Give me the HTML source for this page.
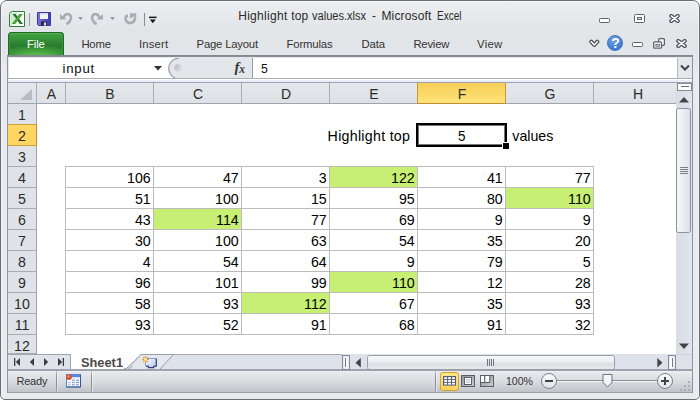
<!DOCTYPE html>
<html><head><meta charset="utf-8"><title>Highlight top values.xlsx - Microsoft Excel</title>
<style>
*{box-sizing:border-box;margin:0;padding:0}
html,body{width:700px;height:400px;overflow:hidden;background:#fff}
body{font-family:"Liberation Sans",sans-serif;color:#222;position:relative}
.abs,#win div,#win span,#win svg{position:absolute}
#win{position:absolute;left:0;top:0;width:700px;height:400px;border:1px solid #6a6f77;border-radius:7px 7px 5px 5px;box-shadow:inset 0 1px 0 #fafbfc,inset 1px 0 0 #f1f3f5,inset -1px 0 0 #f1f3f5;background:linear-gradient(#edeef1 0,#e2e5e8 28px,#e3e6e9 56px,#e9ebef 70px,#e9ebef 100%);overflow:hidden}
.t{white-space:nowrap;line-height:1}
.tab{font-size:12.5px;color:#3a3a3a;top:37px;letter-spacing:-0.1px}
.ch{top:83px;height:21px;padding-left:1px;background:linear-gradient(#e4e7eb,#dde1e6);border-right:1px solid #a9adb3;border-bottom:1px solid #9fa4ab;text-align:center;font-size:14px;line-height:22.300px;color:#2b2b2b}
.rh{left:8px;width:29px;height:21px;background:#dfe3e8;border-right:1px solid #9fa4ab;border-bottom:1px solid #a8acb3;text-align:center;font-size:14.200px;line-height:22.200px;color:#2b2b2b}
.c{height:22px;border:1px solid #bcbcbc;font-size:14.200px;line-height:22.200px;text-align:right;padding-right:2.300px;color:#000}
.g{background:#c6ef73}
</style></head><body>
<div id="win">

<div id="in" style="left:-1px;top:-1px;width:700px;height:400px">
<div class="t" style="left:0;top:0;width:700px;height:30px">
<span class="t" style="left:238.20px;top:10.44px;font-size:12px;letter-spacing:0.301px;color:#2a2a2a">Highlight</span>
<span class="t" style="left:291.20px;top:10.44px;font-size:12px;letter-spacing:0.106px;color:#2a2a2a">top</span>
<span class="t" style="left:312.30px;top:10.44px;font-size:12px;letter-spacing:0.000px;color:#2a2a2a;transform:scaleX(0.9218);transform-origin:0 0">values.xlsx</span>
<span class="t" style="left:372.00px;top:10.44px;font-size:12px;letter-spacing:0.204px;color:#2a2a2a">-</span>
<span class="t" style="left:381.40px;top:10.44px;font-size:12px;letter-spacing:0.170px;color:#2a2a2a">Microsoft</span>
<span class="t" style="left:436.50px;top:10.44px;font-size:12px;letter-spacing:0.000px;color:#2a2a2a;transform:scaleX(0.8349);transform-origin:0 0">Excel</span>
</div>
<div style="left:7px;top:55px;width:686px;height:338px;border:1px solid #8f949c;border-top:none"></div>
<div style="left:7px;top:55px;width:686px;height:3px;background:linear-gradient(#80858d,#8b9098 60%,#b4b8be)"></div>
<div style="left:8px;top:32px;width:56px;height:23px;border-radius:3.500px 3.500px 0 0;border:1px solid #1e6a24;border-bottom:none;box-shadow:inset 0 1px 0 #55ad52,inset 1px 0 0 #3b9440,inset -1px 0 0 #3b9440;background:radial-gradient(ellipse 75% 55% at 50% 108%,#66cb52 0,rgba(80,180,70,.6) 55%,rgba(60,150,60,0) 100%),linear-gradient(#45a244 0,#338c36 35%,#2a7b2d 60%,#2d8230 100%)"></div>
<span class="t" style="left:27.00px;top:39.13px;font-size:11.3px;letter-spacing:-0.102px;color:#fff">File</span>
<span class="t" style="left:81.40px;top:39.13px;font-size:11.3px;letter-spacing:-0.186px;color:#333">Home</span>
<span class="t" style="left:139.10px;top:39.13px;font-size:11.3px;letter-spacing:0.140px;color:#333">Insert</span>
<span class="t" style="left:196.60px;top:39.13px;font-size:11.3px;letter-spacing:-0.196px;color:#333">Page Layout</span>
<span class="t" style="left:286.60px;top:39.13px;font-size:11.3px;letter-spacing:-0.162px;color:#333">Formulas</span>
<span class="t" style="left:361.40px;top:39.13px;font-size:11.3px;letter-spacing:-0.067px;color:#333">Data</span>
<span class="t" style="left:413.40px;top:39.13px;font-size:11.3px;letter-spacing:-0.208px;color:#333">Review</span>
<span class="t" style="left:477.10px;top:39.13px;font-size:11.3px;letter-spacing:0.253px;color:#333">View</span>
<svg style="left:9px;top:11px" width="16" height="16" viewBox="0 0 16 16"><path d="M3.500 .5H15.500V15.500H.5V3.500Q.5 .5 3.500 .5z" fill="#f6fbf4" stroke="#2a8038"/><path d="M1.500 4Q1.500 1.500 4 1.500H8L3 14.500H1.500z" fill="#cfe8cd"/><path d="M3 13L7 7.600 3.600 3H6.600L8.600 5.800 10.700 3H13.500L10 7.700 14 13H10.800L8.500 9.800 6 13z" fill="#1f7232"/><path d="M8.600 5.800L10.700 3H13.500L6 13H3z" fill="#4fa62f"/></svg>
<div style="left:29px;top:13px;width:1px;height:13px;background:#9a9ea5"></div>
<svg style="left:37px;top:12px" width="14" height="14" viewBox="0 0 14 14"><defs><linearGradient id="gV" x1="0" y1="0" x2="1" y2="0"><stop offset="0" stop-color="#7a78de"/><stop offset=".5" stop-color="#5451c6"/><stop offset="1" stop-color="#3f3cad"/></linearGradient></defs><path d="M.5 .5H13.500V13.500H1.500L.5 12.500z" fill="url(#gV)" stroke="#3b389e"/><rect x="3" y="1" width="8" height="6" fill="#f2f4fb"/><rect x="3" y="1" width="8" height="1.500" fill="#d5daf0"/><rect x="4" y="9.500" width="6" height="4" fill="#2a2a4a"/><rect x="7" y="10.500" width="2" height="3" fill="#e8e8f0"/></svg>
<svg style="left:59px;top:12px" width="14" height="13" viewBox="0 0 14 13"><path d="M1 2V7.600H7.300z" fill="#a9acb2"/><path d="M4.600 5.200C6 1.800 9.900 .9 11.400 3.600C12.600 6 11.400 9.400 8.300 11.600" fill="none" stroke="#a9acb2" stroke-width="2.600" stroke-linecap="round"/></svg>
<svg style="left:78px;top:16.500px" width="5" height="4"><path d="M0 0h5l-2.500 3.200z" fill="#9a9da3"/></svg>
<svg style="left:90px;top:12px" width="14" height="13" viewBox="0 0 14 13"><g transform="translate(14,0) scale(-1,1)"><path d="M1 2V7.600H7.300z" fill="#a9acb2"/><path d="M4.600 5.200C6 1.800 9.900 .9 11.400 3.600C12.600 6 11.400 9.400 8.300 11.600" fill="none" stroke="#a9acb2" stroke-width="2.600" stroke-linecap="round"/></g></svg>
<svg style="left:110px;top:16.500px" width="5" height="4"><path d="M0 0h5l-2.500 3.200z" fill="#9a9da3"/></svg>
<svg style="left:123px;top:12px" width="14" height="13" viewBox="0 0 14 13"><path d="M4.800 3.300A4.600 4.100 0 1 0 11.500 5.600" fill="none" stroke="#aaadb3" stroke-width="2.900" stroke-linecap="butt"/><path d="M7 1.200H13.300V5.500L10.500 4.500 7 6.800z" fill="#aaadb3"/></svg>
<div style="left:144px;top:13px;width:1px;height:13px;background:#868a91"></div>
<svg style="left:148.500px;top:16px" width="8" height="8"><rect x="0" y=".6" width="7.600" height="1.500" fill="#1a1a1a"/><path d="M.8 3.600h6L3.800 7.300z" fill="#1a1a1a"/></svg>
<div style="left:599px;top:18px;width:11px;height:5px;border:1.500px solid #5d6168;border-radius:1.500px;background:#fff"></div>
<div style="left:634px;top:14px;width:11px;height:9px;border:1.500px solid #5d6168;border-radius:1.500px;background:#fff"></div>
<div style="left:637px;top:17px;width:5px;height:3px;border:1px solid #5d6168;background:#e8eaed"></div>
<svg style="left:669px;top:14px" width="11" height="9" viewBox="0 0 11 9"><g stroke-linecap="round" fill="none"><path d="M2.200 1.900L8.800 7.100M8.800 1.900L2.200 7.100" stroke="#50545c" stroke-width="3.900"/><path d="M2.200 1.900L8.800 7.100M8.800 1.900L2.200 7.100" stroke="#fff" stroke-width="1.400"/></g></svg>
<svg style="left:588.500px;top:39px" width="11" height="9" viewBox="0 0 11 9"><g fill="none" stroke-linecap="round" stroke-linejoin="round"><path d="M2.300 2.700L5.300 6 8.300 2.700" stroke="#484c54" stroke-width="4"/><path d="M2.300 2.700L5.300 6 8.300 2.700" stroke="#fff" stroke-width="1.600"/></g></svg>
<div style="left:607px;top:35px;width:16px;height:16px;border-radius:8px;border:1px solid #4173bd;background:radial-gradient(circle at 42% 28%,#76a6ea 0,#4a85d8 50%,#3b71c6 100%)"></div>
<span class="t" style="left:611.200px;top:35.700px;font-size:14px;font-weight:bold;color:#fff">?</span>
<div style="left:632px;top:42px;width:11px;height:5px;border:1.500px solid #5d6168;border-radius:1.500px;background:#fff"></div>
<svg style="left:653px;top:38px" width="12" height="11" viewBox="0 0 12 11"><rect x="5.700" y=".7" width="5.700" height="6.600" rx="1" fill="#fff" stroke="#5d6168" stroke-width="1.300"/><rect x=".7" y="3.900" width="7.800" height="6.300" rx="1" fill="#fff" stroke="#5d6168" stroke-width="1.300"/><rect x="2.900" y="6.300" width="3.400" height="1.900" fill="#e4e6ea" stroke="#5d6168" stroke-width=".9"/></svg>
<svg style="left:676px;top:38.500px" width="11" height="9" viewBox="0 0 11 9"><g stroke-linecap="round" fill="none"><path d="M2.200 1.900L8.800 7.100M8.800 1.900L2.200 7.100" stroke="#50545c" stroke-width="3.900"/><path d="M2.200 1.900L8.800 7.100M8.800 1.900L2.200 7.100" stroke="#fff" stroke-width="1.400"/></g></svg>
<div style="left:8px;top:57px;width:684px;height:22px;background:#e3e6ea"></div>
<div style="left:9px;top:58px;width:175px;height:20px;background:#fff"></div>
<span class="t" style="left:62.60px;top:61.73px;font-size:13.2px;letter-spacing:0.755px;color:#111">input</span>
<svg style="left:154px;top:66px" width="9" height="5"><path d="M0 0h8l-4 4.5z" fill="#333"/></svg>
<svg style="left:168px;top:57.500px" width="85" height="21" viewBox="0 0 85 21"><path d="M11 0H85V21H11A10.500 10.500 0 0 1 11 0z" fill="#e3e6ea"/><path d="M11 .2A10.300 10.300 0 0 0 11 20.800" fill="none" stroke="#9b9fa6" stroke-width="1.100"/></svg>
<div style="left:173.500px;top:63.500px;width:8.500px;height:8.500px;border-radius:5px;background:radial-gradient(circle at 30% 30%,#bcbfc5,#dfe1e4 80%)"></div>
<span class="t" style="left:234.500px;top:60.300px;font-size:15px;font-family:'Liberation Serif',serif;font-style:italic;font-weight:bold;color:#383838">f<span style="position:relative;font-size:11.500px;margin-left:-.2px;top:1.200px">x</span></span>
<div style="left:252px;top:58px;width:425px;height:20px;background:#fff;border-left:1px solid #979ba3"></div>
<span class="t" style="left:260.60px;top:62.09px;font-size:13.6px;letter-spacing:0.000px;color:#111;transform:scaleX(0.8990);transform-origin:0 0">5</span>
<div style="left:677px;top:58px;width:15px;height:20px;background:#e4e7eb;border-left:1px solid #b5b9bf"></div>
<svg style="left:680px;top:64px" width="10" height="8"><path d="M1 1.5l4 4 4-4" fill="none" stroke="#444" stroke-width="2"/></svg>
<div style="left:8px;top:78px;width:684px;height:5px;background:#fff;border-top:1px solid #a9adb4;border-bottom:1px solid #9fa4ab"></div>
<div style="left:8px;top:80px;width:684px;height:2px;background:linear-gradient(#f1f3fc,#e3e7f6)"></div>
<div style="left:8px;top:83px;width:669px;height:271px;background:#fff"></div>
<div class="ch" style="left:8px;width:29px;top:83px"></div>
<svg style="left:20px;top:89px" width="13" height="12"><path d="M12 0v11H0z" fill="#b9bcc1"/></svg>
<div class="ch" style="left:37px;width:29px;top:83px">A</div>
<div class="ch" style="left:66px;width:88px;top:83px">B</div>
<div class="ch" style="left:154px;width:88px;top:83px">C</div>
<div class="ch" style="left:242px;width:88px;top:83px">D</div>
<div class="ch" style="left:330px;width:88px;top:83px">E</div>
<div class="ch" style="left:417px;width:89px;top:83px;background:linear-gradient(#f8cd57,#fbd968 50%,#fee37b);border-left:1px solid #c99a3c;border-right-color:#c99a3c;border-bottom-color:#c28c32;color:#2f352f">F</div>
<div class="ch" style="left:506px;width:88px;top:83px">G</div>
<div class="ch" style="left:594px;width:88px;top:83px">H</div>
<div class="rh" style="top:104px;height:21px">1</div>
<div class="rh" style="top:124px;height:22px;line-height:22.200px;background:#ffd661;border-top:1px solid #d3a13c;border-bottom-color:#d3a13c;border-right-color:#c28c32">2</div>
<div class="rh" style="top:146px;height:21px">3</div>
<div class="rh" style="top:167px;height:21px">4</div>
<div class="rh" style="top:188px;height:21px">5</div>
<div class="rh" style="top:209px;height:21px">6</div>
<div class="rh" style="top:230px;height:21px">7</div>
<div class="rh" style="top:251px;height:21px">8</div>
<div class="rh" style="top:272px;height:21px">9</div>
<div class="rh" style="top:293px;height:21px">10</div>
<div class="rh" style="top:314px;height:21px">11</div>
<div class="rh" style="top:335px;height:19px">12</div>
<div class="c" style="left:65px;top:166px;width:89px">106</div>
<div class="c" style="left:153px;top:166px;width:89px">47</div>
<div class="c" style="left:241px;top:166px;width:89px">3</div>
<div class="c g" style="left:329px;top:166px;width:89px">122</div>
<div class="c" style="left:417px;top:166px;width:89px">41</div>
<div class="c" style="left:505px;top:166px;width:89px">77</div>
<div class="c" style="left:65px;top:187px;width:89px">51</div>
<div class="c" style="left:153px;top:187px;width:89px">100</div>
<div class="c" style="left:241px;top:187px;width:89px">15</div>
<div class="c" style="left:329px;top:187px;width:89px">95</div>
<div class="c" style="left:417px;top:187px;width:89px">80</div>
<div class="c g" style="left:505px;top:187px;width:89px">110</div>
<div class="c" style="left:65px;top:208px;width:89px">43</div>
<div class="c g" style="left:153px;top:208px;width:89px">114</div>
<div class="c" style="left:241px;top:208px;width:89px">77</div>
<div class="c" style="left:329px;top:208px;width:89px">69</div>
<div class="c" style="left:417px;top:208px;width:89px">9</div>
<div class="c" style="left:505px;top:208px;width:89px">9</div>
<div class="c" style="left:65px;top:229px;width:89px">30</div>
<div class="c" style="left:153px;top:229px;width:89px">100</div>
<div class="c" style="left:241px;top:229px;width:89px">63</div>
<div class="c" style="left:329px;top:229px;width:89px">54</div>
<div class="c" style="left:417px;top:229px;width:89px">35</div>
<div class="c" style="left:505px;top:229px;width:89px">20</div>
<div class="c" style="left:65px;top:250px;width:89px">4</div>
<div class="c" style="left:153px;top:250px;width:89px">54</div>
<div class="c" style="left:241px;top:250px;width:89px">64</div>
<div class="c" style="left:329px;top:250px;width:89px">9</div>
<div class="c" style="left:417px;top:250px;width:89px">79</div>
<div class="c" style="left:505px;top:250px;width:89px">5</div>
<div class="c" style="left:65px;top:271px;width:89px">96</div>
<div class="c" style="left:153px;top:271px;width:89px">101</div>
<div class="c" style="left:241px;top:271px;width:89px">99</div>
<div class="c g" style="left:329px;top:271px;width:89px">110</div>
<div class="c" style="left:417px;top:271px;width:89px">12</div>
<div class="c" style="left:505px;top:271px;width:89px">28</div>
<div class="c" style="left:65px;top:292px;width:89px">58</div>
<div class="c" style="left:153px;top:292px;width:89px">93</div>
<div class="c g" style="left:241px;top:292px;width:89px">112</div>
<div class="c" style="left:329px;top:292px;width:89px">67</div>
<div class="c" style="left:417px;top:292px;width:89px">35</div>
<div class="c" style="left:505px;top:292px;width:89px">93</div>
<div class="c" style="left:65px;top:313px;width:89px">93</div>
<div class="c" style="left:153px;top:313px;width:89px">52</div>
<div class="c" style="left:241px;top:313px;width:89px">91</div>
<div class="c" style="left:329px;top:313px;width:89px">68</div>
<div class="c" style="left:417px;top:313px;width:89px">91</div>
<div class="c" style="left:505px;top:313px;width:89px">32</div>
<span class="t" style="left:327.60px;top:128.98px;font-size:14.2px;letter-spacing:0.289px;color:#000">Highlight top</span>
<span class="t" style="left:512.30px;top:128.98px;font-size:14.2px;letter-spacing:-0.008px;color:#000">values</span>
<div style="left:416px;top:123px;width:91px;height:24px;border:2px solid #000;box-shadow:inset 0 0 0 1px #777;background:#fff"></div>
<span class="t" style="left:458.00px;top:128.98px;font-size:14.2px;letter-spacing:0.000px;color:#000;transform:scaleX(0.9497);transform-origin:0 0">5</span>
<div style="left:502px;top:142px;width:7px;height:7px;background:#000;border:1px solid #fff;border-right:none;border-bottom:none"></div>
<div style="left:676px;top:83px;width:16px;height:271px;background:linear-gradient(90deg,#d8dce4,#e1e5ec)"></div>
<div style="left:677px;top:83px;width:15px;height:8px;background:#fbfbff;border:1px solid #868a92"></div>
<div style="left:681px;top:86px;width:8px;height:1px;background:#6a6e76"></div>
<svg style="left:679px;top:96px" width="11" height="7"><path d="M0 6.5h10L5 1z" fill="#444"/></svg>
<div style="left:676px;top:108px;width:15px;height:125px;border:1px solid #8d9199;border-radius:2.500px;background:linear-gradient(90deg,#f5f6f9,#eceef2 45%,#dde0e6)"></div>
<div style="left:680px;top:167px;width:8px;height:1px;background:#7a7e86"></div>
<div style="left:680px;top:169px;width:8px;height:1px;background:#7a7e86"></div>
<div style="left:680px;top:171px;width:8px;height:1px;background:#7a7e86"></div>
<div style="left:680px;top:173px;width:8px;height:1px;background:#7a7e86"></div>
<svg style="left:679px;top:343px" width="11" height="7"><path d="M0 .5h10L5 6z" fill="#444"/></svg>
<div style="left:8px;top:354px;width:684px;height:16px;background:#dde1ea"></div>
<div style="left:141px;top:354px;width:201px;height:1px;background:#a5a9b0"></div>
<div style="left:8px;top:369px;width:684px;height:2px;background:linear-gradient(#aeb2ba 0,#959aa2 50%,#9da1a9 75%,#d8dbe0 100%)"></div>
<div style="left:8px;top:354px;width:63px;height:15px;background:#dfe3ea;border-top:1px solid #a0a4ab;border-right:1px solid #a0a4ab"></div>
<svg style="left:13px;top:357.500px" width="56" height="9"><g fill="#3c3c3c"><rect x="1" y="0" width="1.300" height="8"/><path d="M7 0v8L2.800 4z"/><path d="M21 0v8l-4.200-4z"/><path d="M31 0v8l4.200-4z"/><path d="M45 0v8l4.200-4z"/><rect x="49.700" y="0" width="1.300" height="8"/></g></svg>
<svg style="left:70px;top:354px" width="74" height="16"><path d="M1 0V15H53Q56.500 14.500 58.500 12L71 0z" fill="#fff"/><path d="M53.500 15.300Q57 15 58.800 12.500L71 .5" fill="none" stroke="#8e939b" stroke-width="1"/></svg>
<span class="t" style="left:80.60px;top:355.57px;font-size:13.5px;letter-spacing:0.000px;color:#4a4a4a;font-weight:bold;transform:scaleX(0.9487);transform-origin:0 0">Sheet1</span>
<svg style="left:126px;top:354px" width="50" height="16"><path d="M15.500 .5H47.500L34 15H2Q5 14.500 6.500 12z" fill="#e4e7eb"/><path d="M15 .5H47.500L34 15" fill="none" stroke="#9a9fa7" stroke-width="1"/><path d="M2.500 14.500Q5 14 6.500 12" fill="none" stroke="#9a9fa7" stroke-width="1"/></svg>
<svg style="left:141.500px;top:355.800px" width="17" height="14" viewBox="0 0 17 14"><defs><linearGradient id="gS" x1="0" y1="0" x2="1" y2="1"><stop offset="0" stop-color="#fbfcff"/><stop offset="1" stop-color="#b9c8e6"/></linearGradient></defs><path d="M3.500 2.500H14V10H11.500V11.300H6.500V10H3.500z" fill="url(#gS)" stroke="#7f9bd0" stroke-width="1"/><path d="M4 10.300H6.300V11.600H11.800V10.300H14.400V2.500" fill="none" stroke="#2e4474" stroke-width="1.100"/><g stroke="#e8951c" stroke-width="1.100"><path d="M3.500 .2v6.600M.2 3.500h6.600M1.200 1.200l4.600 4.600M5.800 1.200L1.200 5.800"/></g><circle cx="3.500" cy="3.500" r="1.400" fill="#fff6c8"/></svg>
<div style="left:342px;top:355px;width:335px;height:14px;background:#dde1ea"></div>
<div style="left:342px;top:355px;width:8px;height:15px;background:#fbfbff;border:1px solid #868a92;box-shadow:inset 0 0 0 1px #e8eaf6"></div>
<div style="left:345px;top:358px;width:1px;height:9px;background:#777"></div>
<svg style="left:354.500px;top:358px" width="7" height="10"><path d="M5.800 0v9.500L.5 4.700z" fill="#444"/></svg>
<div style="left:367px;top:354.500px;width:248px;height:15px;border:1px solid #9a9fa7;border-radius:2.500px;background:linear-gradient(#f6f7f9,#eceef1 45%,#dcdfe4 55%,#e4e7eb)"></div>
<div style="left:487px;top:359px;width:1px;height:7px;background:#6f747c"></div>
<div style="left:489px;top:359px;width:1px;height:7px;background:#6f747c"></div>
<div style="left:491px;top:359px;width:1px;height:7px;background:#6f747c"></div>
<div style="left:493px;top:359px;width:1px;height:7px;background:#6f747c"></div>
<svg style="left:657px;top:358px" width="7" height="10"><path d="M.3 0v9.500L5.500 4.700z" fill="#444"/></svg>
<div style="left:668px;top:355px;width:8px;height:15px;background:#fbfbff;border:1px solid #868a92;box-shadow:inset 0 0 0 1px #e8eaf6"></div>
<div style="left:671.500px;top:358px;width:1px;height:9px;background:#777"></div>
<div style="left:677px;top:354px;width:15px;height:15px;background:#dde1ea;border-top:1px solid #cfd3d9"></div>
<div style="left:8px;top:371px;width:684px;height:21px;background:linear-gradient(#eff0f3 0,#e6e8eb 8%,#d9dce0 50%,#c0c4c9 100%)"></div>
<div style="left:8px;top:392px;width:684px;height:1px;background:#9b9fa7"></div>
<span class="t" style="left:16.40px;top:376.19px;font-size:11px;letter-spacing:-0.199px;color:#333">Ready</span>
<div style="left:56px;top:371px;width:1px;height:21px;background:linear-gradient(#b9bcc2,#8a8e95 30%,#8a8e95 80%,#a4a8af)"></div>
<div style="left:57px;top:371px;width:1px;height:21px;background:rgba(255,255,255,.45)"></div>
<div style="left:91px;top:371px;width:1px;height:21px;background:linear-gradient(#b9bcc2,#8a8e95 30%,#8a8e95 80%,#a4a8af)"></div>
<div style="left:92px;top:371px;width:1px;height:21px;background:rgba(255,255,255,.45)"></div>
<svg style="left:66px;top:373.500px" width="15" height="14" viewBox="0 0 15 14"><rect x=".5" y=".5" width="14" height="12.500" fill="#fdfdff" stroke="#5d84c6"/><path d="M.5 13H14.500V1" fill="none" stroke="#35598f" stroke-width="1"/><rect x="1" y="1" width="13" height="2" fill="#4d8be6"/><rect x="1" y="3.500" width="13" height=".7" fill="#a9c1ea"/><g fill="#7e9cd8"><rect x="6" y="5.600" width="2.800" height="1.200"/><rect x="10" y="5.600" width="3" height="1.200"/><rect x="2" y="7.900" width="2.800" height="1.200" fill="#a9bde6"/><rect x="6" y="7.900" width="2.800" height="1.200"/><rect x="10" y="7.900" width="3" height="1.200"/><rect x="2" y="10.200" width="2.800" height="1.200" fill="#a9bde6"/><rect x="6" y="10.200" width="2.800" height="1.200"/><rect x="10" y="10.200" width="3" height="1.200"/></g><circle cx="3" cy="3.100" r="2.900" fill="#d8522d"/><circle cx="2.400" cy="2.300" r="1.100" fill="#f3a184"/></svg>
<div style="left:435px;top:371px;width:1px;height:21px;background:linear-gradient(#b9bcc2,#8a8e95 30%,#8a8e95 80%,#a4a8af)"></div>
<div style="left:436px;top:371px;width:1px;height:21px;background:rgba(255,255,255,.45)"></div>
<div style="left:440px;top:372px;width:19px;height:19px;border:1px solid #d9a125;border-radius:3px;background:linear-gradient(#fde88f,#fbd25c)"></div>
<svg style="left:443px;top:376px" width="13" height="10" viewBox="0 0 13 10"><rect x="0" y="0" width="13" height="9.600" fill="#525d71"/><g fill="#fff"><rect x="1.200" y="1.200" width="2.900" height="1.900"/><rect x="5.100" y="1.200" width="2.900" height="1.900"/><rect x="9" y="1.200" width="2.900" height="1.900"/><rect x="1.200" y="4" width="2.900" height="1.900"/><rect x="5.100" y="4" width="2.900" height="1.900"/><rect x="9" y="4" width="2.900" height="1.900"/><rect x="1.200" y="6.800" width="2.900" height="1.800"/><rect x="5.100" y="6.800" width="2.900" height="1.800"/><rect x="9" y="6.800" width="2.900" height="1.800"/></g></svg>
<svg style="left:461px;top:375px" width="14" height="12" viewBox="0 0 14 12"><defs><linearGradient id="gA" x1="0" y1="0" x2="1" y2="1"><stop offset="0" stop-color="#8f9298"/><stop offset="1" stop-color="#c9ccd1"/></linearGradient></defs><rect x=".5" y=".5" width="13" height="11" fill="url(#gA)" stroke="#5b5f67"/><rect x="3.500" y="2.500" width="7" height="7" fill="#fff" stroke="#5b5f67"/><path d="M5 4.500h4M5 6h4M5 7.500h4" stroke="#b9bcc2" stroke-width=".8"/></svg>
<svg style="left:480px;top:375px" width="14" height="12" viewBox="0 0 14 12"><rect x=".5" y=".5" width="13" height="11" fill="url(#gA)" stroke="#5b5f67"/><rect x="1" y="1" width="8.500" height="6.200" fill="#fff"/><path d="M4.700 1v6.200" stroke="#6a6e76" stroke-width="1.300"/><path d="M1 7.500h8.800V1" fill="none" stroke="#5b5f67" stroke-width="1"/></svg>
<span class="t" style="left:506.00px;top:376.19px;font-size:11px;letter-spacing:0.000px;color:#333;transform:scaleX(0.9597);transform-origin:0 0">100%</span>
<div style="left:556px;top:380px;width:102px;height:1px;background:#8a8e96"></div>
<div style="left:556px;top:381px;width:102px;height:1px;background:#f2f3f5"></div>
<div style="left:541px;top:373px;width:16px;height:16px;border-radius:8px;border:1px solid #7b8088;background:linear-gradient(#fdfdfd,#dfe2e6)"></div>
<div style="left:545px;top:380px;width:8px;height:2px;background:#444"></div>
<div style="left:657px;top:373px;width:16px;height:16px;border-radius:8px;border:1px solid #7b8088;background:linear-gradient(#fdfdfd,#dfe2e6)"></div>
<div style="left:661px;top:380px;width:8px;height:2px;background:#444"></div>
<div style="left:664px;top:377px;width:2px;height:8px;background:#444"></div>
<svg style="left:602px;top:373px" width="11" height="15" viewBox="0 0 11 15"><path d="M1 1.500H10V9.500L5.500 13.800 1 9.500z" fill="#f4f5f7" stroke="#6d7179" stroke-width="1"/></svg>
<svg style="left:679px;top:380px" width="13" height="12" viewBox="0 0 13 12"><g fill="#a9adb4"><rect x="9" y="1" width="2" height="2"/><rect x="9" y="5" width="2" height="2"/><rect x="5" y="5" width="2" height="2"/><rect x="9" y="9" width="2" height="2"/><rect x="5" y="9" width="2" height="2"/><rect x="1" y="9" width="2" height="2"/></g></svg>
</div></div></body></html>
